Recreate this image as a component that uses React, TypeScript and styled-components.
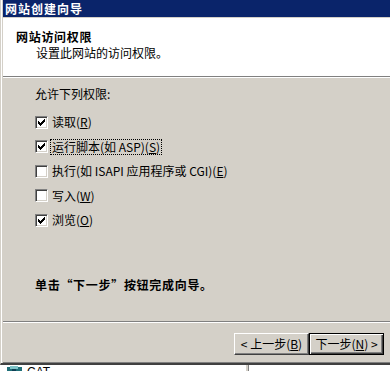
import React from "react";
import styled, { createGlobalStyle, css } from "styled-components";

const GlobalStyle = createGlobalStyle`
  html, body {
    margin: 0;
    padding: 0;
    background: #ffffff;
  }
  body {
    font-family: "Noto Sans CJK SC", "Liberation Sans", sans-serif;
    font-size: 12px;
    color: #000000;
  }
`;

const permissions = [
  { text: "读取(", key: "R", rest: ")", checked: true, focused: false },
  { text: "运行脚本(如 ASP)(", key: "S", rest: ")", checked: true, focused: true },
  {
    text: "执行(如 ISAPI 应用程序或 CGI)(",
    key: "E",
    rest: ")",
    checked: false,
    focused: false,
  },
  { text: "写入(", key: "W", rest: ")", checked: false, focused: false },
  { text: "浏览(", key: "O", rest: ")", checked: true, focused: false },
];

function CheckMark() {
  return (
    <svg width="7" height="7" viewBox="0 0 7 7" shapeRendering="crispEdges">
      <path
        fill="#000"
        d="M6 0h1v1h-1z M5 1h2v1h-2z M0 2h1v1h-1z M4 2h3v1h-3z M0 3h2v1h-2z M3 3h3v1h-3z M0 4h5v1h-5z M1 5h3v1h-3z M2 6h1v1h-1z"
      />
    </svg>
  );
}

export default function App() {
  return (
    <>
      <GlobalStyle />
      <SScreen>
        <SWindow>
          <STitleBar>网站创建向导</STitleBar>
          <SHeader>
            <SHeaderTitle>网站访问权限</SHeaderTitle>
            <SHeaderSub>设置此网站的访问权限。</SHeaderSub>
          </SHeader>

          <SBody>
            <SGroupLabel>允许下列权限:</SGroupLabel>
            <SCheckList>
              {permissions.map((p) => (
                <SCheckRow key={p.key}>
                  <SCheckBox>{p.checked && <CheckMark />}</SCheckBox>
                  <SLabel $focused={p.focused}>
                    {p.text}
                    <u>{p.key}</u>
                    {p.rest}
                  </SLabel>
                </SCheckRow>
              ))}
            </SCheckList>
            <SHint>单击“下一步”按钮完成向导。</SHint>
          </SBody>

          <SButtonBar>
            <SButton>
              &lt; 上一步(<u>B</u>)
            </SButton>
            <SButton $default>
              下一步(<u>N</u>) &gt;
            </SButton>
          </SButtonBar>
        </SWindow>

        {/* window behind the dialog, only its top edge shows */}
        <SBehind>
          <SBehindItem>
            <svg width="15" height="6" viewBox="0 0 15 6">
              <rect x="0" y="1" width="15" height="5" fill="#1f6f78" />
              <rect x="3" y="0" width="8" height="3" fill="#7fc4c8" />
              <rect x="5" y="3" width="4" height="3" fill="#0e3f55" />
            </svg>
            <SBehindText>CAT</SBehindText>
          </SBehindItem>
          <SSplitter />
        </SBehind>
      </SScreen>
    </>
  );
}

const SScreen = styled.div`
  width: 390px;
  height: 371px;
  overflow: hidden;
  display: flex;
  flex-direction: column;
`;

const SWindow = styled.div`
  display: flex;
  flex-direction: column;
  background: #d4d0c8;
  border-left: 1px solid #d4d0c8;
  box-shadow: inset 1px 0 #ffffff;
  padding-left: 1px;
  border-bottom: 2px solid #404040;
`;

const STitleBar = styled.div`
  height: 17px;
  margin-left: 1px;
  padding-left: 2px;
  background: #0a246a;
  color: #ffffff;
  font-weight: bold;
  letter-spacing: 1px;
  line-height: 17px;
  margin-bottom: 1px;
`;

const SHeader = styled.div`
  height: 59px;
  box-sizing: border-box;
  padding: 12px 0 0 13px;
  background: #ffffff;
  border-bottom: 1px solid #808080;
  box-shadow: 0 1px #ffffff;
  margin-bottom: 1px;
  margin-left: 1px;
`;

const SHeaderTitle = styled.div`
  font-weight: bold;
  letter-spacing: 0.7px;
  line-height: 14px;
`;

const SHeaderSub = styled.div`
  margin-top: 2px;
  padding-left: 20px;
  line-height: 14px;
`;

const SBody = styled.div`
  height: 243px;
  box-sizing: border-box;
  display: flex;
  flex-direction: column;
  padding: 9px 0 29px 33px;
`;

const SGroupLabel = styled.div`
  line-height: 14px;
`;

const SCheckList = styled.div`
  display: flex;
  flex-direction: column;
  margin-top: 9px;
`;

const SCheckRow = styled.div`
  display: flex;
  align-items: center;
  gap: 2px;
  height: 24.5px;
`;

const SCheckBox = styled.span`
  width: 13px;
  height: 13px;
  box-sizing: border-box;
  display: flex;
  align-items: center;
  justify-content: center;
  background: #ffffff;
  border: 1px solid;
  border-color: #808080 #ffffff #ffffff #808080;
  box-shadow: inset 1px 1px #404040, inset -1px -1px #d4d0c8;
`;

const SLabel = styled.span<{ $focused?: boolean }>`
  line-height: 14px;
  padding: 0 1px;
  border: 1px dotted transparent;
  ${(p) =>
    p.$focused &&
    css`
      border-color: #000000;
    `}
`;

const SHint = styled.div`
  margin-top: auto;
  font-weight: bold;
  letter-spacing: 0.7px;
  line-height: 14px;
`;

const SButtonBar = styled.div`
  height: 42px;
  box-sizing: border-box;
  display: flex;
  justify-content: flex-end;
  align-items: flex-start;
  padding: 11px 6px 0 0;
  border-top: 1px solid #808080;
  box-shadow: inset 0 1px #ffffff;
  border-bottom: 1px solid #808080;
  margin-left: 1px;
`;

const SButton = styled.button<{ $default?: boolean }>`
  width: 75px;
  height: 22px;
  box-sizing: border-box;
  padding: 0;
  font: inherit;
  font-size: 12px;
  line-height: 14px;
  color: #000000;
  background: #d4d0c8;
  border: 1px solid;
  border-color: #ffffff #404040 #404040 #ffffff;
  box-shadow: inset -1px -1px #808080;
  display: flex;
  align-items: center;
  justify-content: center;
  ${(p) =>
    p.$default &&
    css`
      border: 1px solid #000000;
      box-shadow: inset 1px 1px #ffffff, inset -1px -1px #404040,
        inset -2px -2px #808080;
    `}
`;

const SBehind = styled.div`
  flex: 1;
  display: grid;
  grid-template-columns: 246px 3px 1px 1fr;
  background: #ffffff;
  overflow: hidden;
`;

const SBehindItem = styled.div`
  display: flex;
  align-items: flex-start;
  gap: 5px;
  padding: 1px 0 0 7px;
`;

const SBehindText = styled.span`
  font-family: "Liberation Sans", sans-serif;
  font-size: 12px;
  line-height: 12px;
`;

const SSplitter = styled.div`
  background: #d4d0c8;
  border-right: 1px solid #808080;
`;
